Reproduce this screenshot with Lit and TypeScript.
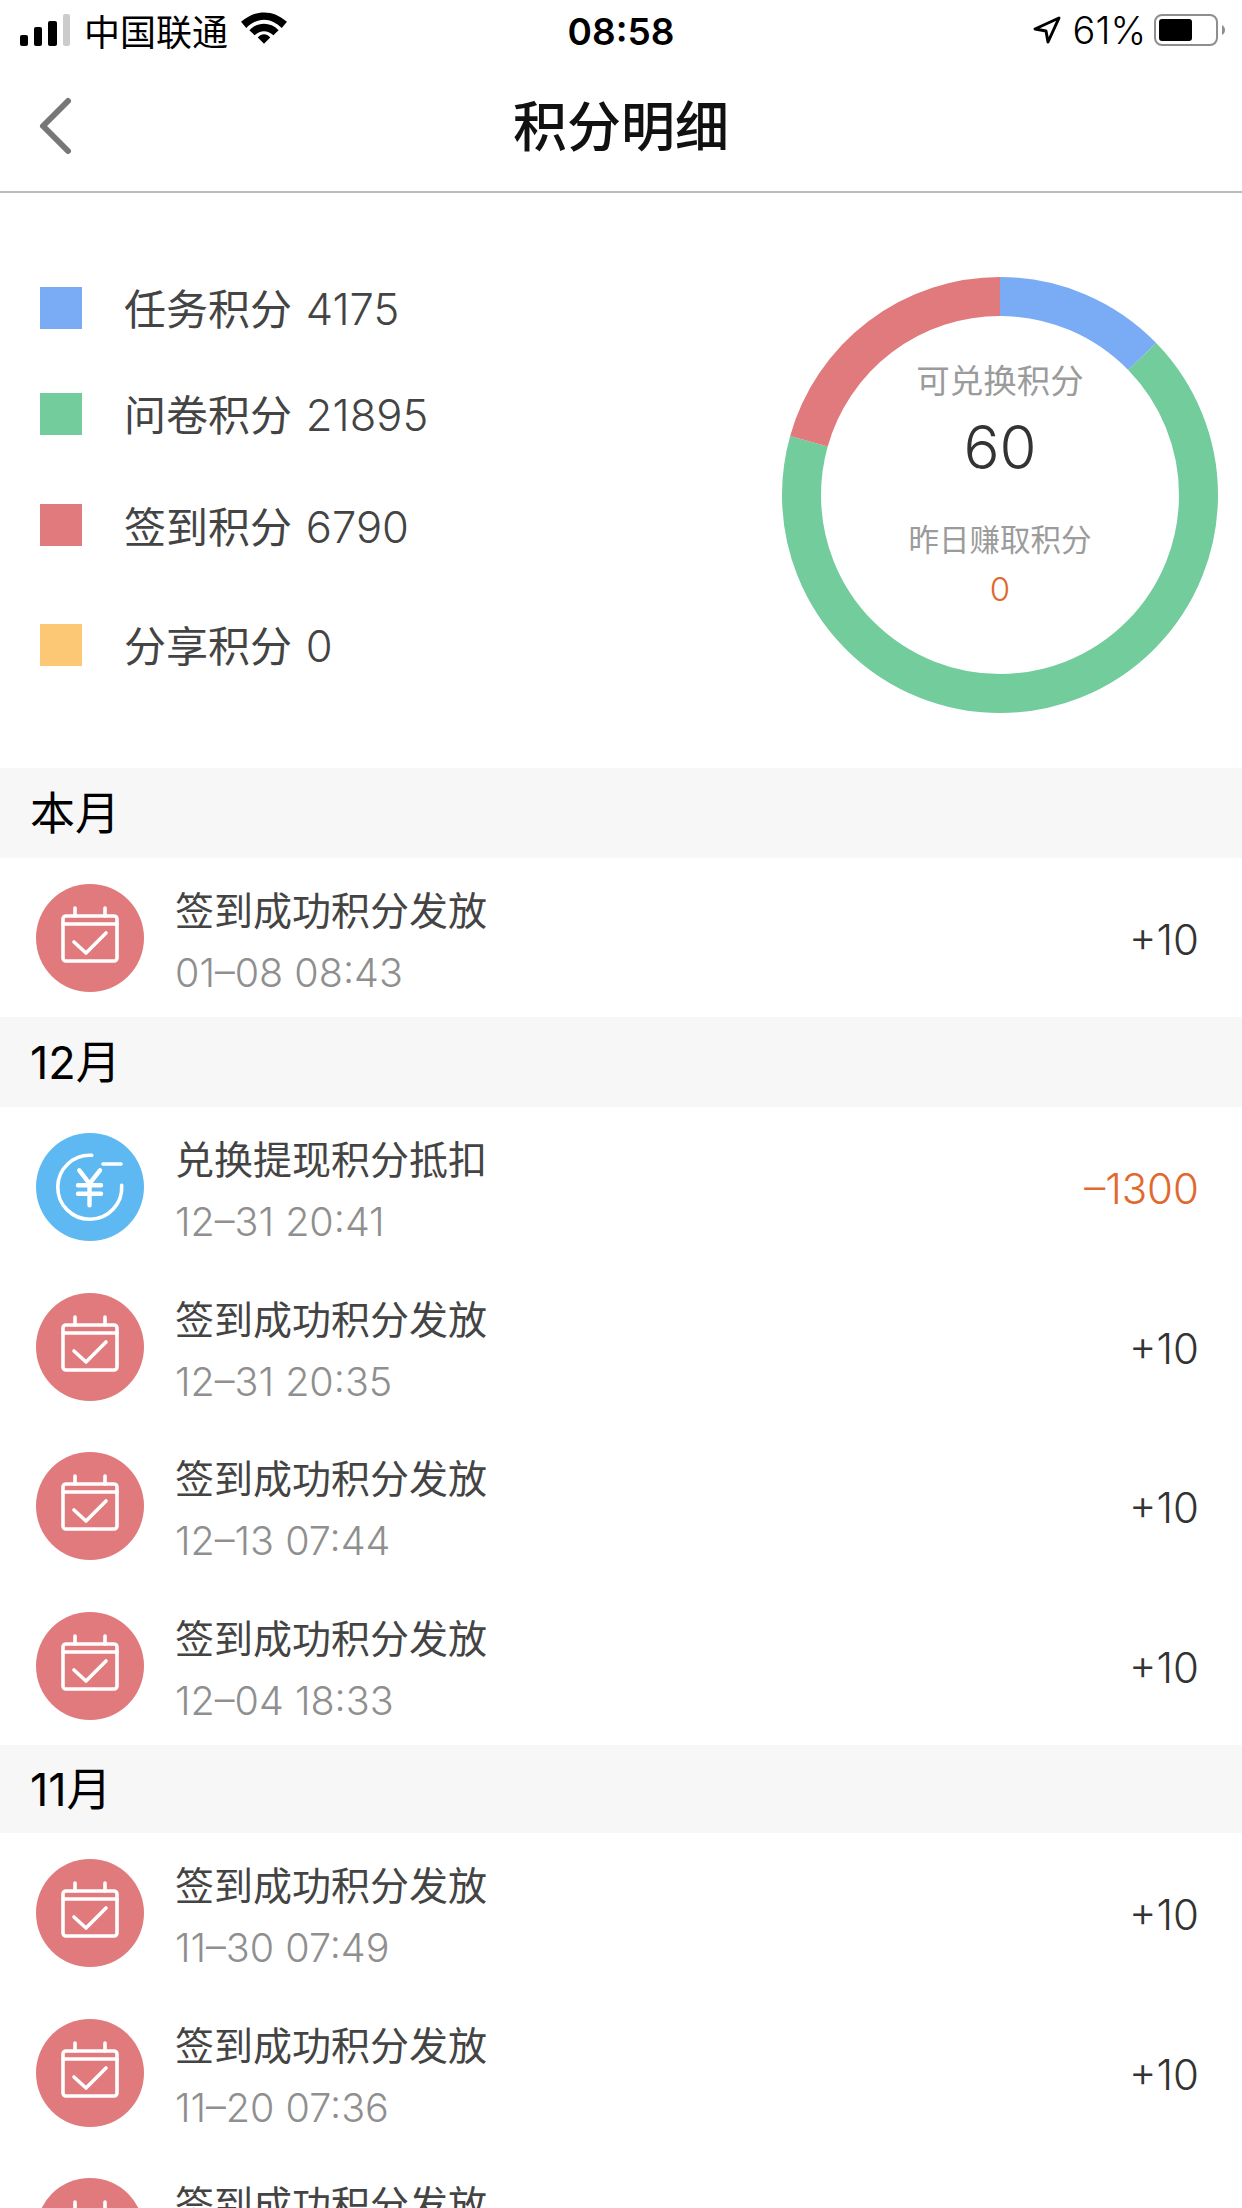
import { LitElement, css, html, svg } from 'lit'
import { customElement } from 'lit/decorators.js'

const RED = '#e07a7c'
const GREEN = '#72cc9c'
const BLUE = '#7aabf5'
const YELLOW = '#fcc875'

// legend, in the order the ring draws them from 12 o'clock
const legend = [
  { name: '任务积分', value: 4175, color: BLUE },
  { name: '问卷积分', value: 21895, color: GREEN },
  { name: '签到积分', value: 6790, color: RED },
  { name: '分享积分', value: 0, color: YELLOW },
]

const SIGN = '签到成功积分发放'

const groups = [
  {
    month: '本月',
    rows: [{ kind: 'sign', title: SIGN, time: '01–08 08:43', amount: '+10' }],
  },
  {
    month: '12月',
    rows: [
      { kind: 'cash', title: '兑换提现积分抵扣', time: '12–31 20:41', amount: '–1300' },
      { kind: 'sign', title: SIGN, time: '12–31 20:35', amount: '+10' },
      { kind: 'sign', title: SIGN, time: '12–13 07:44', amount: '+10' },
      { kind: 'sign', title: SIGN, time: '12–04 18:33', amount: '+10' },
    ],
  },
  {
    month: '11月',
    rows: [
      { kind: 'sign', title: SIGN, time: '11–30 07:49', amount: '+10' },
      { kind: 'sign', title: SIGN, time: '11–20 07:36', amount: '+10' },
      // only the title of this one is still on screen
      { kind: 'sign', title: SIGN, time: '', amount: '' },
    ],
  },
]

const calendarIcon = html`<svg class="badge" viewBox="0 0 108 108">
  <circle cx="54" cy="54" r="54" fill="${RED}"></circle>
  <g fill="none" stroke="#fff" stroke-width="3.6" stroke-linecap="round" stroke-linejoin="round">
    <rect x="27" y="32" width="54" height="45" rx="3"></rect>
    <path d="M27 40H81M39 24V32M69 24V32"></path>
    <path d="M38 58L50 69L70 49"></path>
  </g>
</svg>`

const cashIcon = html`<svg class="badge" viewBox="0 0 108 108">
  <circle cx="54" cy="54" r="54" fill="#5eb9f3"></circle>
  <g fill="none" stroke="#fff" stroke-width="3.6" stroke-linecap="round" stroke-linejoin="round">
    <path d="M55.7 22.3A32 32 0 1 0 85.7 52.3"></path>
    <path d="M67 31H85"></path>
    <path d="M43.3 37.3L53.5 50.7L64 37.3M42 52.3H65M42 60.7H65M53.5 50.7V72.3" stroke-width="4.4"></path>
  </g>
</svg>`

@customElement('app-root')
export class AppRoot extends LitElement {
  static styles = css`
    :host {
      display: block;
      height: 2208px;
      overflow: hidden;
      background: #fff;
      font-family: Inter, 'Noto Sans CJK SC', sans-serif;
    }

    .status {
      height: 60px;
      display: grid;
      grid-template-columns: 1fr auto 1fr;
      align-items: center;
      font-size: 36px;
      color: #000;
    }
    .status-left {
      display: flex;
      align-items: center;
      padding-left: 20px;
    }
    .signal {
      width: 50px;
      height: 32px;
      margin-right: 14px;
    }
    .wifi {
      width: 48px;
      height: 36px;
      margin: 0 0 6px 12px;
    }
    .clock {
      padding-top: 2px;
      font-size: 37px;
      font-weight: 600;
    }
    .status-right {
      display: flex;
      align-items: center;
      justify-content: flex-end;
      padding-right: 16px;
    }
    .arrow {
      width: 28px;
      height: 28px;
      margin-right: 12px;
    }
    .percent {
      font-size: 38px;
      font-weight: 300;
    }
    .battery {
      width: 72px;
      height: 32px;
      margin-left: 8px;
    }

    .nav {
      height: 131px;
      border-bottom: 2px solid #bcbcbc;
      display: grid;
      grid-template-columns: 1fr auto 1fr;
      align-items: center;
    }
    .back {
      width: 36px;
      height: 60px;
      margin-left: 37px;
    }
    .nav-title {
      padding-top: 4px;
      font-size: 54px;
      font-weight: 500;
      color: #111;
      line-height: 70px;
    }

    .summary {
      height: 575px;
      display: flex;
      justify-content: space-between;
    }
    .legend {
      padding: 94px 0 0 40px;
    }
    .legend-row {
      display: flex;
      align-items: center;
      height: 42px;
      font-size: 42px;
      line-height: 42px;
      color: #444;
    }
    .legend-row + .legend-row {
      margin-top: 64px;
    }
    .legend-row:nth-child(3) {
      margin-top: 69px;
    }
    .legend-row:nth-child(4) {
      margin-top: 78px;
    }
    .swatch {
      width: 42px;
      height: 42px;
      margin-right: 42px;
    }
    .legend-text {
      padding-top: 2px;
    }
    .legend-num {
      margin-left: 2px;
      font-size: 43.5px;
      font-weight: 300;
    }
    .legend-row:nth-child(3) .legend-text {
      padding-top: 5px;
    }
    .ring {
      position: relative;
      width: 436px;
      height: 436px;
      margin: 84px 24px 0 0;
    }
    .ring svg {
      display: block;
      width: 436px;
      height: 436px;
    }
    .ring-text {
      position: absolute;
      inset: 0;
      display: flex;
      flex-direction: column;
      align-items: center;
      text-align: center;
    }
    .usable {
      margin-top: 84px;
      font-size: 33.5px;
      line-height: 40px;
      color: #9b9b9b;
    }
    .usable-num {
      margin-top: 16px;
      font-size: 60px;
      font-weight: 300;
      line-height: 60px;
      color: #333;
    }
    .yday {
      margin-top: 43px;
      font-size: 30.5px;
      line-height: 40px;
      color: #9b9b9b;
    }
    .yday-num {
      margin-top: 11px;
      font-size: 33px;
      font-weight: 300;
      line-height: 36px;
      color: #e0692e;
    }

    .month {
      height: 89.5px;
      display: flex;
      align-items: center;
      padding: 0 0 4px 30px;
      box-sizing: border-box;
      background: #f7f7f7;
      font-size: 45px;
      color: #000;
    }
    .group:last-child .month {
      height: 88px;
    }
    .row {
      height: 159.5px;
      display: flex;
      align-items: center;
    }
    .badge {
      flex: none;
      width: 108px;
      height: 108px;
      margin: 2px 31px 0 36px;
    }
    .info {
      flex: 1;
      margin-top: 10px;
    }
    .title {
      font-size: 39px;
      line-height: 50px;
      color: #444;
    }
    .time {
      margin-top: 12px;
      min-height: 50px;
      font-size: 39.5px;
      font-weight: 300;
      line-height: 50px;
      color: #8f8f8f;
    }
    .amount {
      margin-top: 5px;
      padding-right: 43px;
      font-size: 42px;
      font-weight: 300;
      color: #333;
    }
    .amount.minus {
      color: #e0692e;
    }
  `

  // one dash per slice, rotated so it starts at the top
  ringSlices() {
    const total = legend.reduce((sum, l) => sum + l.value, 0)
    const r = 198.5
    const len = 2 * Math.PI * r
    let done = 0
    return legend.map((l) => {
      const part = (l.value / total) * len
      const slice = svg`<circle cx="218" cy="218" r="${r}" fill="none" stroke="${l.color}" stroke-width="39"
        stroke-dasharray="${part} ${len - part}" stroke-dashoffset="${-done}" transform="rotate(-90 218 218)"></circle>`
      done += part
      return slice
    })
  }

  renderStatus() {
    return html`
      <div class="status">
        <div class="status-left">
          <svg class="signal" viewBox="0 0 50 32">
            <rect x="0" y="21" width="8" height="11" rx="2"></rect>
            <rect x="14" y="13" width="8" height="19" rx="2"></rect>
            <rect x="28" y="7" width="9" height="25" rx="2"></rect>
            <rect x="43" y="0" width="7" height="32" rx="2" fill="#ccc"></rect>
          </svg>
          <span>中国联通</span>
          <svg class="wifi" viewBox="0 0 46 32">
            <path d="M23 2C31 2 38 5 45 11L40 17C35 12 29 9 23 9C17 9 11 12 6 17L1 11C8 5 15 2 23 2Z"></path>
            <path d="M23 13C28 13 33 15 37 19L32 24C29 21 26 20 23 20C20 20 17 21 14 24L9 19C13 15 18 13 23 13Z"></path>
            <path d="M23 23C25 23 27 24 29 26L23 32L17 26C19 24 21 23 23 23Z"></path>
          </svg>
        </div>
        <div class="clock">08:58</div>
        <div class="status-right">
          <svg class="arrow" viewBox="0 0 28 28">
            <path d="M26 2L2 13L13 15L15 26Z" fill="none" stroke="#000" stroke-width="3" stroke-linejoin="round"></path>
          </svg>
          <span class="percent">61%</span>
          <svg class="battery" viewBox="0 0 72 32">
            <rect x="1" y="1" width="62" height="30" rx="7" fill="none" stroke="#8e8e8e" stroke-width="2"></rect>
            <rect x="5" y="5" width="33" height="22" rx="3"></rect>
            <path d="M68 11C70 12 71 14 71 16C71 18 70 20 68 21Z" fill="#8e8e8e"></path>
          </svg>
        </div>
      </div>
    `
  }

  render() {
    return html`
      ${this.renderStatus()}
      <div class="nav">
        <svg class="back" viewBox="0 0 36 60">
          <path d="M31 5L6 30L31 55" fill="none" stroke="#777" stroke-width="6" stroke-linecap="round" stroke-linejoin="round"></path>
        </svg>
        <div class="nav-title">积分明细</div>
      </div>

      <div class="summary">
        <div class="legend">
          ${legend.map(
            (l) => html`<div class="legend-row">
              <span class="swatch" style="background:${l.color}"></span>
              <span class="legend-text">${l.name} <span class="legend-num">${l.value}</span></span>
            </div>`
          )}
        </div>
        <div class="ring">
          <svg viewBox="0 0 436 436">${this.ringSlices()}</svg>
          <div class="ring-text">
            <div class="usable">可兑换积分</div>
            <div class="usable-num">60</div>
            <div class="yday">昨日赚取积分</div>
            <div class="yday-num">0</div>
          </div>
        </div>
      </div>

      ${groups.map(
        (g) => html`<div class="group">
          <div class="month">${g.month}</div>
          ${g.rows.map(
            (r) => html`<div class="row">
              ${r.kind === 'sign' ? calendarIcon : cashIcon}
              <div class="info">
                <div class="title">${r.title}</div>
                <div class="time">${r.time}</div>
              </div>
              <div class="amount ${r.amount.startsWith('–') ? 'minus' : ''}">${r.amount}</div>
            </div>`
          )}
        </div>`
      )}
    `
  }
}
